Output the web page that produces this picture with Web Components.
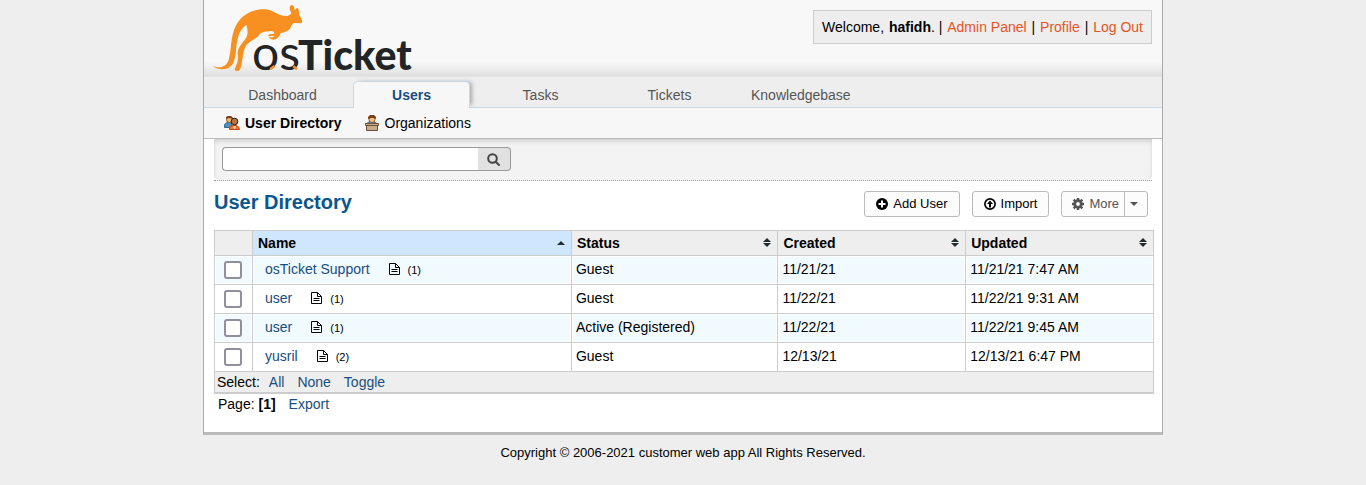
<!DOCTYPE html>
<html lang="en">
<head>
<meta charset="utf-8">
<title>User Directory</title>
<style>
body { margin: 0; background: #eee; color: #000; font: 14px/20px "Liberation Sans", Arial, sans-serif; }
</style>
</head>
<body>
<ticket-app>
  <site-header slot="header"></site-header>
  <main-nav slot="nav">
    <nav-tab>Dashboard</nav-tab>
    <nav-tab active>Users</nav-tab>
    <nav-tab>Tasks</nav-tab>
    <nav-tab>Tickets</nav-tab>
    <nav-tab>Knowledgebase</nav-tab>
  </main-nav>
  <sub-nav slot="nav"></sub-nav>
  <search-bar></search-bar>
  <page-title>
    User Directory
    <tool-button slot="actions" icon="plus">Add User</tool-button>
    <tool-button slot="actions" icon="up">Import</tool-button>
    <tool-button slot="actions" icon="gear" menu>More</tool-button>
  </page-title>
  <user-table></user-table>
  <page-links></page-links>
  <span slot="footer">Copyright © 2006-2021 customer web app All Rights Reserved.</span>
</ticket-app>

<script>
const define = (name, html, setup) => customElements.define(name, class extends HTMLElement {
  constructor() {
    super();
    const t = document.createElement('template');
    t.innerHTML = html;
    this.attachShadow({ mode: 'open' }).append(t.content.cloneNode(true));
  }
  connectedCallback() { if (setup) setup(this, this.shadowRoot); }
});

define('ticket-app', `
<style>
:host { display: block; }
.box { max-width: 958px; margin: 0 auto; background: #fff; border: solid #aaa; border-width: 0 1px; border-bottom: 3px solid #bbb; }
main { padding: 0 8px 18px 10px; }
footer { padding-top: 8px; text-align: center; font-size: 13px; line-height: 20px; }
</style>
<div class="box"><slot name="header"></slot><slot name="nav"></slot><main><slot></slot></main></div>
<footer><slot name="footer"></slot></footer>`);

define('site-header', `
<style>
:host { display: block; }
header { display: flex; justify-content: space-between; align-items: flex-start; height: 76px; padding: 0 10px 0 9px; background: linear-gradient(#f8f8f8 62px, #dfdfdf 76px); border-bottom: 1px solid #e2e2e2; }
svg { display: block; overflow: visible; }
p { margin: 10px 0 0; padding: 6px 8px; border: 1px solid #ccc; background: #eee; }
a { color: #e65524; text-decoration: none; }
b { margin-left: 1px; }
p a { margin: 0 1px; }
p a:last-child { margin-right: 0; }
.os { font: 400 48px Lato, sans-serif; }
.ticket { font: 900 41px Lato, sans-serif; }
</style>
<header>
<a href="#" aria-label="Home">
<svg width="200" height="74" viewBox="39 0 600 222">
  <path fill="#f79020" d="M39 198C62 206 78 202 86 180C94 155 91 120 103 88C117 50 148 28 193 28C219 28 229 48 262 48C270 45 273 42 274 38C268 29 267 18 274 15C280 13 284 23 284 31L290 24Q298 24 297 43L305 58Q310 68 302 70L281 69Q275 73 272 82C267 94 252 98 242 99C240 107 235 113 227 118Q213 122 205 112L219 112L224 107L204 109L207 103L222 101Q226 96 214 93C200 96 188 92 179 103C169 120 143 123 135 143C126 165 129 189 119 211Q111 215 104 211C105 200 115 190 114 168C110 149 120 137 136 117C146 104 143 88 139 75C127 83 117 97 113 117C106 143 111 169 98 192C86 212 55 212 39 198Z"/>
  <g fill="#222426">
    <text class="os" transform="scale(3)" x="52" y="70">os</text>
    <text class="ticket" transform="scale(3)" x="98" y="70">Ticket</text>
  </g>
  <path stroke="#f79020" stroke-width="8" d="M211 207l13-9M280 199l11 9"/>
</svg></a>
<p>Welcome, <b>hafidh</b>. | <a href="#">Admin Panel</a> | <a href="#">Profile</a> | <a href="#">Log Out</a></p>
</header>`);

define('main-nav', `
<style>
:host { display: block; }
nav { display: flex; gap: 12px; align-items: flex-end; height: 30px; padding: 0 20px; background: #eee; border-bottom: 1px solid #c5d9e8; }
</style>
<nav><slot></slot></nav>`);

define('nav-tab', `
<style>
:host { display: block; width: 117px; }
a { display: block; box-sizing: border-box; height: 26px; padding: 4px 11px 0; text-align: center; white-space: nowrap; color: #555; text-decoration: none; }
:host([active]) { margin-bottom: -1px; }
:host([active]) a { height: 27px; padding: 3px 10px 0; font-weight: bold; color: #184e81; background: #f7f7f7; border: 1px solid #c5d9e8; border-bottom: 0; border-radius: 5px 5px 0 0; box-shadow: 4px -1px 4px -2px #aaa; clip-path: inset(-6px -8px 0 -2px); }
</style>
<a href="#"><slot></slot></a>`);

define('sub-nav', `
<style>
:host { display: block; }
nav { display: flex; gap: 22px; height: 30px; align-items: center; padding: 0 20px; background: #f7f7f7; border-bottom: 1px solid #bbb; }
a { display: flex; align-items: center; gap: 5px; color: #000; text-decoration: none; }
.on { font-weight: bold; }
</style>
<nav>
<a href="#" class="on"><svg width="16" height="16" viewBox="0 0 16 16" stroke-width="1">
  <path fill="#4f91be" stroke="#326a96" d="M.5 12.500V10Q1 7.500 4 7.500H7.500V12.500Z"/>
  <circle cx="5.500" cy="4.500" r="3" fill="#efb277" stroke="#8d5a27"/>
  <path fill="#794018" d="M2 4V2L4 1H7L9 3V4L5 3Z"/>
  <path fill="#f27528" stroke="#c84512" d="M5.500 14.500V13Q6 10.500 9 10.500H12Q15 11 15.500 14.500Z"/>
  <circle cx="10.500" cy="6.500" r="3.300" fill="#b8743e" stroke="#352015"/>
  <path fill="#ffd3aa" d="M9 11h3l-1 3h-1Z"/></svg>User Directory</a>
<a href="#"><svg width="16" height="16" viewBox="0 0 16 16" stroke-width="1">
  <path fill="#4f91be" stroke="#326a96" d="M3.500 9.500V8L5 6.500H10L12.500 8V9.500Z"/>
  <circle cx="8" cy="4.500" r="3" fill="#f4bd87" stroke="#9c5a29"/>
  <path fill="#794018" d="M4 4V2L6 0H10L12 2V4L10 3H7Z"/>
  <path fill="#c9aa87" stroke="#68513d" d="M1.500 8.500H14.500V10.500H13.500V15.500H2.500V10.500H1.500ZM2 10.500H14"/></svg>Organizations</a>
</nav>`);

define('search-bar', `
<style>
:host { display: block; margin-right: 2px; border-bottom: 1px dotted #999; }
form { display: flex; padding: 8px 8px 9px; background: #f3f3f3; border-radius: 0 0 5px 5px; box-shadow: inset 0 4px 5px -2px #ccc, inset 3px 0 3px -2px #e4e4e4, inset -3px 0 3px -2px #e4e4e4; }
input { box-sizing: border-box; width: 256px; height: 24px; padding: 0 6px; border: 1px solid #999; border-right: 0; border-radius: 4px 0 0 4px; background: #fff; font: inherit; outline: 0; }
button { width: 33px; height: 24px; padding: 0 2px 0 0; border: 1px solid #999; border-left: 0; border-radius: 0 4px 4px 0; background: #e1e1e1; display: grid; place-items: center; }
</style>
<form onsubmit="return false"><input type="text" aria-label="Search users"><button aria-label="Search"><svg width="13" height="13" viewBox="0 0 13 13" fill="none" stroke="#444" stroke-width="2"><circle cx="5.500" cy="5.500" r="4.300"/><path stroke-linecap="round" d="M9 9l3 3"/></svg></button></form>`);

define('page-title', `
<style>
:host { display: flex; justify-content: space-between; align-items: flex-start; padding: 10px 6px 13px 0; }
h2 { margin: 0; font-size: 20px; line-height: 22px; color: #0a568e; }
div { display: flex; gap: 12px; }
</style>
<h2><slot></slot></h2><div><slot name="actions"></slot></div>`);

const ICONS = {
  plus: '<svg width="12" height="12" viewBox="0 0 12 12"><circle cx="6" cy="6" r="6"/><path stroke="#fff" stroke-width="2" d="M6 2.500v7M2.500 6h7"/></svg>',
  up: '<svg width="12" height="12" viewBox="0 0 12 12" fill="none" stroke="#000" stroke-width="1.700"><circle cx="6" cy="6" r="5.100"/><path stroke-width="2" d="M6 9.500V5"/><path stroke="none" fill="#000" d="M6 2.500L9 6H3Z"/></svg>',
  gear: '<svg width="12" height="12" viewBox="0 0 12 12" fill="none" stroke="#555"><circle cx="6" cy="6" r="3.300" stroke-width="2.800"/><path stroke-width="2.400" d="M6 0v2.500M6 9.500V12M0 6h2.500M9.500 6H12M1.600 1.600l1.800 1.800M8.600 8.600l1.800 1.800M10.400 1.600L8.600 3.400M3.400 8.600l-1.800 1.800"/></svg>'
};
define('tool-button', `
<style>
:host { display: block; }
button { display: flex; align-items: center; gap: 5px; height: 26px; padding: 0 11px 0 10px; border: 1px solid #bbb; border-radius: 3px; background: #fcfcfc; font: 13px/24px "Liberation Sans", Arial, sans-serif; color: #000; }
:host(:not([menu])) button { padding: 0 11px; }
i { display: flex; }
.caret { display: none; }
:host([menu]) button { color: #555; padding-right: 0; }
:host([menu]) .caret { display: grid; place-items: center; width: 23px; height: 24px; border-left: 1px solid #bbb; padding-right: 4px; box-sizing: border-box; }
</style>
<button><i></i><slot></slot><span class="caret"><svg width="8" height="4" fill="#555"><path d="M0 0h8L4 4Z"/></svg></span></button>`,
(el, root) => { root.querySelector('i').innerHTML = ICONS[el.getAttribute('icon')]; });

const USERS = [
  ['osTicket Support', 1, 'Guest', '11/21/21', '11/21/21 7:47 AM'],
  ['user', 1, 'Guest', '11/22/21', '11/22/21 9:31 AM'],
  ['user', 1, 'Active (Registered)', '11/22/21', '11/22/21 9:45 AM'],
  ['yusril', 2, 'Guest', '12/13/21', '12/13/21 6:47 PM']
];
const DOC = '<svg width="11" height="12" viewBox="0 0 11 12" fill="none" stroke="#000"><path d="M.5.5H6.500L10.500 4.500V11.500H.5Z"/><path d="M6.500.5V4.500H10.500M2.500 6.500h6M2.500 8.500h6"/></svg>';
const BOTH = '<svg width="8" height="9" fill="#232b2f"><path d="M4 0L8 4H0ZM0 5H8L4 9Z"/></svg>';
const UP = '<svg width="8" height="4" fill="#232b2f"><path d="M4 0L8 4H0Z"/></svg>';
define('user-table', `
<style>
:host { display: block; }
table { width: 100%; table-layout: fixed; border-spacing: 1px; background: #ccc; border-bottom: 1px solid #ccc; }
th { height: 24px; padding: 0 6px 0 5px; background: #eee; text-align: left; }
th.sorted { background: #cfe6ff; }
th div { display: flex; justify-content: space-between; align-items: center; }
th svg { margin-bottom: 1px; }
td { height: 26px; padding: 0 3px; border: 1px solid #fff; background: #fff; line-height: 24px; vertical-align: top; }
tbody tr:nth-child(odd) td { background: #f0faff; }
td.name { padding-left: 11px; }
td.name div { display: flex; align-items: center; height: 24px; }
td svg { margin: 0 8px 0 19px; }
small { font-size: 11px; line-height: 24px; padding-top: 2px; }
a { color: #184e81; text-decoration: none; }
input { appearance: none; display: block; box-sizing: border-box; width: 18px; height: 18px; margin: 4px 0 0 5px; border: 2px solid #8f8f9d; border-radius: 3px; background: #fff; }
tfoot td { height: 20px; padding: 0 2px; border: 0; background: #eee; line-height: 20px; }
tfoot a { margin-left: 9px; }
tfoot a + a { margin-left: 13px; }
.check { width: 37px; } .status { width: 22%; } .date { width: 20%; }
</style>
<table>
<colgroup><col class="check"><col><col class="status"><col class="date"><col class="date"></colgroup>
<thead><tr><th></th><th class="sorted"><div>Name ${UP}</div></th><th><div>Status ${BOTH}</div></th><th><div>Created ${BOTH}</div></th><th><div>Updated ${BOTH}</div></th></tr></thead>
<tbody>${USERS.map(([n, c, s, a, b]) => `<tr><td><input type="checkbox" aria-label="Select ${n}"></td><td class="name"><div><a href="#">${n}</a>${DOC}<small>(${c})</small></div></td><td>${s}</td><td>${a}</td><td>${b}</td></tr>`).join('')}</tbody>
<tfoot><tr><td colspan="5">Select:<a href="#">All</a><a href="#">None</a><a href="#">Toggle</a></td></tr></tfoot>
</table>`);

define('page-links', `
<style>
:host { display: block; padding-left: 4px; }
a { color: #184e81; text-decoration: none; margin-left: 13px; }
</style>
Page: <b>[1]</b><a href="#">Export</a>`);
</script>
</body>
</html>
